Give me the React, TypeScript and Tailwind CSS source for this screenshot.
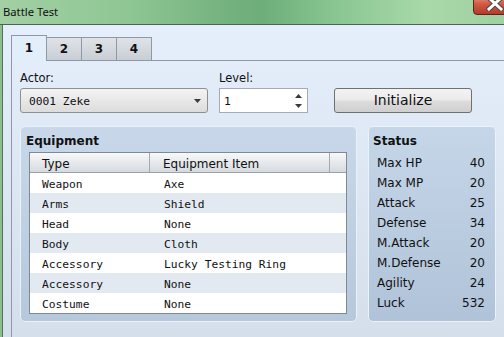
import React from "react";

const equipment = [
  { type: "Weapon", item: "Axe" },
  { type: "Arms", item: "Shield" },
  { type: "Head", item: "None" },
  { type: "Body", item: "Cloth" },
  { type: "Accessory", item: "Lucky Testing Ring" },
  { type: "Accessory", item: "None" },
  { type: "Costume", item: "None" },
];

const stats = [
  { name: "Max HP", value: 40 },
  { name: "Max MP", value: 20 },
  { name: "Attack", value: 25 },
  { name: "Defense", value: 34 },
  { name: "M.Attack", value: 20 },
  { name: "M.Defense", value: 20 },
  { name: "Agility", value: 24 },
  { name: "Luck", value: 532 },
];

const sans = "font-['DejaVu_Sans',sans-serif]";
const mono = "font-['DejaVu_Sans_Mono',monospace]";

// little filled triangle for combo / spin arrows
const Tri = ({ up = false }: { up?: boolean }) => (
  <svg width="7" height="4" viewBox="0 0 7 4" className="block">
    <path d={up ? "M0 4 L3.5 0 L7 4 Z" : "M0 0 L7 0 L3.5 4 Z"} fill="#3a3a3a" />
  </svg>
);

const Tab = ({ label, active }: { label: string; active?: boolean }) =>
  active ? (
    <div className="relative z-10 w-[36px] h-[26px] border-t border-l border-r border-[#8e99a5] bg-[#e3eefb] flex justify-center pt-[4px] font-bold text-[12px] leading-[16px] text-[#111]">
      {label}
    </div>
  ) : (
    <div className="w-[36px] h-[24px] ml-[-1px] border border-[#8e99a5] bg-gradient-to-b from-[#dfe3e8] to-[#c9ced5] flex justify-center pt-[3px] font-bold text-[12px] leading-[16px] text-[#111]">
      {label}
    </div>
  );

export default function App() {
  return (
    <div className={`relative w-[504px] h-[337px] overflow-hidden bg-[#86c18b] flex flex-col ${sans}`}>
      {/* title bar */}
      <div className="relative h-[25px] shrink-0 border-b border-[#4f6156] bg-[linear-gradient(90deg,#a2d0a4_0%,#8fc694_25%,#74b27f_45%,#6dae7a_52%,#8cc893_68%,#a9d9a9_85%,#9fd0a1_100%)] flex items-center pl-[3px]">
        <span className="font-['Noto_Sans',sans-serif] text-[11.25px] leading-[14px] text-[#111] mt-[-1px]">
          Battle Test
        </span>
        {/* close button, clipped by the page */}
        <div className="absolute right-[-8px] top-[-7px] w-[39px] h-[22px] rounded-[4px] border border-[#5e2419] bg-gradient-to-b from-[#e9a48f] via-[#cf5a42] to-[#b7392a]">
          <svg width="18" height="14" viewBox="0 0 18 14" className="absolute left-[12px] top-[3px]">
            <path d="M3 1 L15 12 M15 1 L3 12" stroke="#4a4a4a" strokeWidth="5" strokeLinecap="square" />
            <path d="M3 1 L15 12 M15 1 L3 12" stroke="#ffffff" strokeWidth="3" strokeLinecap="square" />
          </svg>
        </div>
      </div>

      {/* client area */}
      <div className="flex-1 ml-[2px] border-l border-[#5e6d64] bg-gradient-to-b from-[#e4effb] to-[#d3deea] pt-[10px] pl-[8px]">
        <div className="flex flex-col">
          {/* tabs */}
          <div className="flex items-end h-[26px] mb-[-1px]">
            <Tab label="1" active />
            <Tab label="2" />
            <Tab label="3" />
            <Tab label="4" />
          </div>

          {/* tab page */}
          <div className="w-[520px] h-[300px] border border-[#8e99a5] pt-[10px] pl-[8px]">
            <div className="flex items-end">
              <div className="w-[188px]">
                <div className="h-[14px] mb-[3px] text-[11.5px] leading-[14px] text-[#111]">Actor:</div>
                <div className="h-[25px] rounded-[3px] border border-[#8f8f8f] bg-gradient-to-b from-[#f4f4f4] to-[#dcdcdc] flex items-center justify-between pl-[8px] pr-[6px]">
                  <span className={`${mono} text-[11.25px] leading-[23px] pt-[2px] text-[#111]`}>0001 Zeke</span>
                  <Tri />
                </div>
              </div>

              <div className="w-[89px] ml-[11px]">
                <div className="h-[14px] mb-[3px] text-[11.5px] leading-[14px] text-[#111]">Level:</div>
                <div className="h-[25px] border border-[#a4abb3] bg-white flex items-center justify-between pl-[4px] pr-[5px]">
                  <span className={`${mono} text-[11.25px] leading-[23px] pt-[2px] text-[#111]`}>1</span>
                  <div className="flex flex-col gap-[6px]">
                    <Tri up />
                    <Tri />
                  </div>
                </div>
              </div>

              <button className="ml-[26px] w-[138px] h-[25px] rounded-[3px] border border-[#707070] bg-[linear-gradient(180deg,#f3f3f3_0%,#ebebeb_48%,#dddddd_52%,#cfcfcf_100%)] text-[14px] leading-[23px] text-[#111]">
                Initialize
              </button>
            </div>

            <div className="flex mt-[13px]">
              {/* equipment */}
              <div className="w-[337px] h-[196px] rounded-[5px] border border-[#eaf1f8] bg-gradient-to-b from-[#c8d8ea] to-[#b5c8dc] pt-[6px] pl-[5px]">
                <div className="font-bold text-[12px] leading-[16px] text-[#111]">Equipment</div>
                <div className="mt-[3px] ml-[3px] w-[318px] border border-[#7f8893] bg-white">
                  <div className="flex h-[20px] border-b border-[#9aa1a9] bg-gradient-to-b from-[#f7f8f9] to-[#d6dadf] text-[12px] leading-[22px] text-[#111]">
                    <div className="w-[120px] border-r border-[#a3a9b0] pl-[12px]">Type</div>
                    <div className="w-[180px] border-r border-[#a3a9b0] pl-[13px]">Equipment Item</div>
                    <div className="flex-1" />
                  </div>
                  {equipment.map((e, i) => (
                    <div
                      key={i}
                      className={`flex h-[20px] ${mono} text-[11.25px] leading-[24px] text-[#111] ${i % 2 === 1 ? "bg-[#e2e9f1]" : "bg-white"}`}
                    >
                      <div className="w-[120px] pl-[12px]">{e.type}</div>
                      <div className="pl-[14px]">{e.item}</div>
                    </div>
                  ))}
                </div>
              </div>

              {/* status */}
              <div className="ml-[11px] w-[128px] h-[196px] rounded-[5px] border border-[#eaf1f8] bg-gradient-to-b from-[#c6d6e9] to-[#b0c3d8] pt-[6px] pl-[4px] pr-[10px]">
                <div className="font-bold text-[12px] leading-[16px] text-[#111]">Status</div>
                <div className="mt-[4px] pl-[4px]">
                  {stats.map((s) => (
                    <div key={s.name} className="flex justify-between h-[20px] text-[12px] leading-[20px] text-[#111]">
                      <span>{s.name}</span>
                      <span>{s.value}</span>
                    </div>
                  ))}
                </div>
              </div>
            </div>
          </div>
        </div>
      </div>
    </div>
  );
}
